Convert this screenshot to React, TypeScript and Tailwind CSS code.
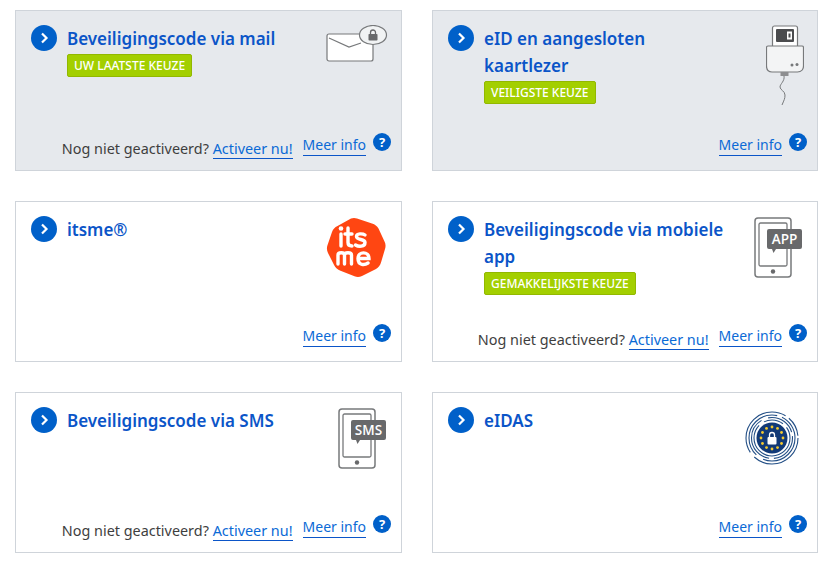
import React from 'react';

const Phone = ({ label }: { label: string }) => (
  <svg width="50" height="62" viewBox="0 0 50 62" fill="none">
    <rect x="1" y="1" width="36" height="59" rx="3" stroke="#77797b" strokeWidth="1.5" fill="#fff" />
    <rect x="5" y="6" width="28" height="43" rx="1.5" stroke="#77797b" strokeWidth="1.3" />
    <circle cx="19" cy="54.5" r="2.2" fill="#68696b" />
    <path d="M15 12h31a2 2 0 0 1 2 2v16a2 2 0 0 1-2 2H22l-2.5 4-1.5-4h-3a2 2 0 0 1-2-2V14a2 2 0 0 1 2-2z" fill="#68696b" />
    <text x="30.5" y="27" textAnchor="middle" fontSize="13.5" fill="#fff" fontFamily="Open Sans, sans-serif" fontWeight="600">{label}</text>
  </svg>
);

const Mail = () => (
  <svg width="62" height="38" viewBox="0 0 62 38" fill="none">
    <rect x="1" y="9" width="46" height="27" rx="2" fill="#fff" stroke="#77797b" strokeWidth="1.2" />
    <path d="M3 13l20 9 12-4" stroke="#77797b" strokeWidth="1.2" />
    <ellipse cx="47" cy="10" rx="13.5" ry="9.5" fill="#f1f3f4" stroke="#77797b" strokeWidth="1.2" />
    <rect x="42.5" y="9" width="9" height="6.5" rx="0.8" fill="#68696b" />
    <path d="M44.5 9V7.5a2.5 2.5 0 0 1 5 0V9" stroke="#68696b" strokeWidth="1.3" />
  </svg>
);

const Reader = () => (
  <svg width="38" height="82" viewBox="0 0 38 82" fill="none">
    <rect x="6.5" y="1" width="25" height="22" rx="2" fill="#fff" stroke="#77797b" strokeWidth="1.2" />
    <rect x="10" y="4" width="18" height="13" rx="1" fill="#4b4c4e" />
    <rect x="21" y="6.5" width="5" height="8" fill="#fff" />
    <rect x="22.5" y="8.500" width="2" height="4" fill="#4b4c4e" />
    <path d="M2 21h34a1.5 1.5 0 0 1 1.5 1.5V41c0 3-2 6-6 6H6c-4 0-5.500-3-5.500-6V22.500A1.500 1.500 0 0 1 2 21z" fill="#f3f4f5" stroke="#77797b" strokeWidth="1.200" />
    <circle cx="26" cy="40" r="1.500" fill="#77797b" />
    <circle cx="31" cy="39.500" r="1.500" fill="#77797b" />
    <rect x="14.500" y="47" width="8" height="4" fill="#8d8e90" />
    <path d="M18 51c1 5-4 8-4 11s5 4 5 8-1 5-3 10" stroke="#77797b" strokeWidth="1" />
  </svg>
);

const Itsme = () => (
  <svg width="62" height="62" viewBox="0 0 62 62">
    <path d="M26 2.500c2-.8 4-.8 6 0l15 5c3 1 5 2.500 6.500 5l6 13c1.300 2.500 1.300 5 .5 7.500l-4 13.500c-.8 3-2.500 5-5 6.500l-14 7c-2.500 1.200-5 1.300-7.500.3l-14-5.500c-3-1.200-5-3-6.300-5.500L3 37c-1.200-2.500-1.400-5-.6-7.500L7 16c1-2.800 2.800-4.800 5.500-6z" fill="#ff4612" />
    <g stroke="#fff" strokeLinecap="round" fill="none" strokeWidth="3.400">
      <path d="M16 18v12" />
      <path d="M23 12v14.500c0 2.500 1.500 3.500 4 3.500M20 18h7" />
      <path d="M40 19c-2-1.500-8.500-2-8.500 1.500 0 4 8.500 2 8.500 6 0 4.500-6.500 4.500-9.500 2.500" />
      <path d="M13 48V39c0-3 6.500-3 6.500 0v9M19.500 39c0-3 7-3 7 0v9" />
      <path d="M33 42.500h11c0-7.500-11-7.500-11 0s7 6.500 10 4.500" />
    </g>
    <circle cx="16" cy="12.500" r="2.300" fill="#fff" />
  </svg>
);

const Eidas = () => {
  const stars = Array.from({ length: 12 }, (_, i) => {
    const a = (i * Math.PI) / 6;
    return { x: 28 + 11 * Math.cos(a), y: 28 + 11 * Math.sin(a) };
  });
  return (
    <svg width="56" height="56" viewBox="0 0 56 56" fill="none">
      <g stroke="#234f86" strokeWidth="1.100">
        <circle cx="28" cy="28" r="26" strokeDasharray="60 6 70 4 20 3" />
        <circle cx="28" cy="28" r="23" strokeDasharray="45 8 60 5" />
        <circle cx="28" cy="28" r="20.500" strokeDasharray="30 5 50 7 30 4" />
        <circle cx="28" cy="28" r="18" strokeDasharray="70 6 20 5" />
      </g>
      <circle cx="28" cy="28" r="15.500" fill="#123a77" />
      {stars.map((s, i) => <circle key={i} cx={s.x} cy={s.y} r="1.400" fill="#f4c92e" />)}
      <rect x="23.500" y="27" width="9" height="7.500" rx="1" fill="#fff" />
      <path d="M25.500 27v-2a2.500 2.500 0 0 1 5 0v2" stroke="#fff" strokeWidth="1.300" />
    </svg>
  );
};

const Card = ({ title, badge, icon, activate, active, iconClass }: {
  title: React.ReactNode; badge?: string; icon: React.ReactNode; activate?: boolean; active?: boolean; iconClass: string;
}) => (
  <div className={`relative flex h-[161px] flex-col border border-[#cfd4da] pl-[15px] pr-[10px] pt-[14px] pb-[10px] ${active ? 'bg-[#e6e9ed]' : 'bg-white'}`}>
    <div className="flex gap-[10px] pr-[70px]">
      <span className="flex h-[26px] w-[26px] shrink-0 items-center justify-center rounded-full bg-[#0060c9]">
        <svg width="10" height="12" viewBox="0 0 10 12" fill="none"><path d="M3 1.500 7.500 6 3 10.500" stroke="#fff" strokeWidth="2.200" /></svg>
      </span>
      <div>
        <h2 className="text-[17px] font-semibold leading-[27px] text-[#0b55c8]">{title}</h2>
        {badge && (
          <span className="mt-[2px] inline-block rounded-[2px] border border-[#92b800] bg-[#a3cf00] px-[6px] text-[12px] font-medium leading-[21px] text-white">
            {badge}
          </span>
        )}
      </div>
    </div>
    <div className={`absolute ${iconClass}`}>{icon}</div>
    <div className="mt-auto flex h-[25px] items-start justify-end leading-[20px]">
      {activate && (
        <span className="mt-[4px] mr-[10px] text-[14.400px] text-[#3e3e3e]">
          Nog niet geactiveerd?{' '}
          <a className="border-b border-[#0b55c8] text-[#0b6ad6]">Activeer nu!</a>
        </span>
      )}
      <a className="border-b border-[#0b55c8] text-[14px] text-[#0b6ad6]">Meer info</a>
      <span className="ml-[7px] -mt-[2px] flex h-[18px] w-[18px] items-center justify-center rounded-full bg-[#0060c9] text-[13px] font-bold leading-none text-white">?</span>
    </div>
  </div>
);

export default function App() {
  return (
    <div className="h-[565px] w-[830px] bg-white pl-[15px] pr-[12px] pt-[10px] font-['Noto_Sans',sans-serif]">
      <div className="grid grid-cols-[387px_386px] gap-x-[30px] gap-y-[30px]">
        <Card active title="Beveiligingscode via mail" badge="UW LAATSTE KEUZE" activate icon={<Mail />} iconClass="right-[13px] top-[14px]" />
        <Card active title={<>eID en aangesloten<br />kaartlezer</>} badge="VEILIGSTE KEUZE" icon={<Reader />} iconClass="right-[13px] top-[14px]" />
        <Card title="itsme®" icon={<Itsme />} iconClass="right-[14px] top-[14px]" />
        <Card title={<>Beveiligingscode via mobiele<br />app</>} badge="GEMAKKELIJKSTE KEUZE" activate icon={<Phone label="APP" />} iconClass="right-[13px] top-[15px]" />
        <Card title="Beveiligingscode via SMS" activate icon={<Phone label="SMS" />} iconClass="right-[13px] top-[15px]" />
        <Card title="eIDAS" icon={<Eidas />} iconClass="right-[17px] top-[17px]" />
      </div>
    </div>
  );
}
